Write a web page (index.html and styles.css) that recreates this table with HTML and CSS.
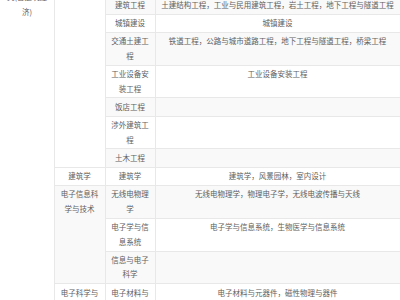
FILE: index.html
```html
<!DOCTYPE html>
<html lang="zh">
<head>
<meta charset="utf-8">
<link rel="stylesheet" href="styles.css">
</head>
<body>
<table class="grid">
  <colgroup>
    <col class="c1"><col class="c2"><col class="c3"><col class="c4">
  </colgroup>
  <tbody>
    <tr>
      <td rowspan="13" class="cat"><div class="cat-text"><span>类(含建筑经</span><span>济)</span></div></td>
      <td rowspan="8"></td>
      <td>矿井建设</td>
      <td>矿井建设</td>
    </tr>
    <tr class="alt">
      <td>建筑工程</td>
      <td>土建结构工程，工业与民用建筑工程，岩土工程，地下工程与隧道工程</td>
    </tr>
    <tr>
      <td>城镇建设</td>
      <td>城镇建设</td>
    </tr>
    <tr class="alt">
      <td>交通土建工程</td>
      <td>铁道工程，公路与城市道路工程，地下工程与隧道工程，桥梁工程</td>
    </tr>
    <tr>
      <td>工业设备安装工程</td>
      <td>工业设备安装工程</td>
    </tr>
    <tr class="alt">
      <td>饭店工程</td>
      <td></td>
    </tr>
    <tr>
      <td>涉外建筑工程</td>
      <td></td>
    </tr>
    <tr class="alt">
      <td>土木工程</td>
      <td></td>
    </tr>
    <tr>
      <td>建筑学</td>
      <td>建筑学</td>
      <td>建筑学，风景园林，室内设计</td>
    </tr>
    <tr class="alt">
      <td rowspan="3">电子信息科学与技术</td>
      <td>无线电物理学</td>
      <td>无线电物理学，物理电子学，无线电波传播与天线</td>
    </tr>
    <tr>
      <td>电子学与信息系统</td>
      <td>电子学与信息系统，生物医学与信息系统</td>
    </tr>
    <tr class="alt">
      <td>信息与电子科学</td>
      <td></td>
    </tr>
    <tr>
      <td>电子科学与技术</td>
      <td>电子材料与元器件</td>
      <td>电子材料与元器件，磁性物理与器件</td>
    </tr>
  </tbody>
</table>
</body>
</html>
```

FILE: styles.css
```css
html, body {
  margin: 0;
  background: #fff;
}
body {
  font-family: "Noto Sans CJK SC", "Noto Sans", sans-serif;
  font-size: 7.5px;
  color: #606060;
  overflow: hidden;
}
.grid {
  border-collapse: collapse;
  table-layout: fixed;
  width: 400px;
  margin-top: -23px;
}
.c1 { width: 54px; }
.c2 { width: 51px; }
.c3 { width: 50px; }
.c4 { width: 245px; }
.grid td {
  border: 1px solid #e8e8e8;
  padding: 1.4px 4px;
  line-height: 14.5px;
  text-align: center;
  vertical-align: top;
}
.grid tr.alt td {
  background: #f9f9f9;
}
.grid td.cat {
  padding: 12px 0 0;
  background: #fff;
  border-left: 0;
}
.cat-text {
  width: 54px;
  display: flex;
  flex-direction: column;
  align-items: center;
  white-space: nowrap;
}
```
